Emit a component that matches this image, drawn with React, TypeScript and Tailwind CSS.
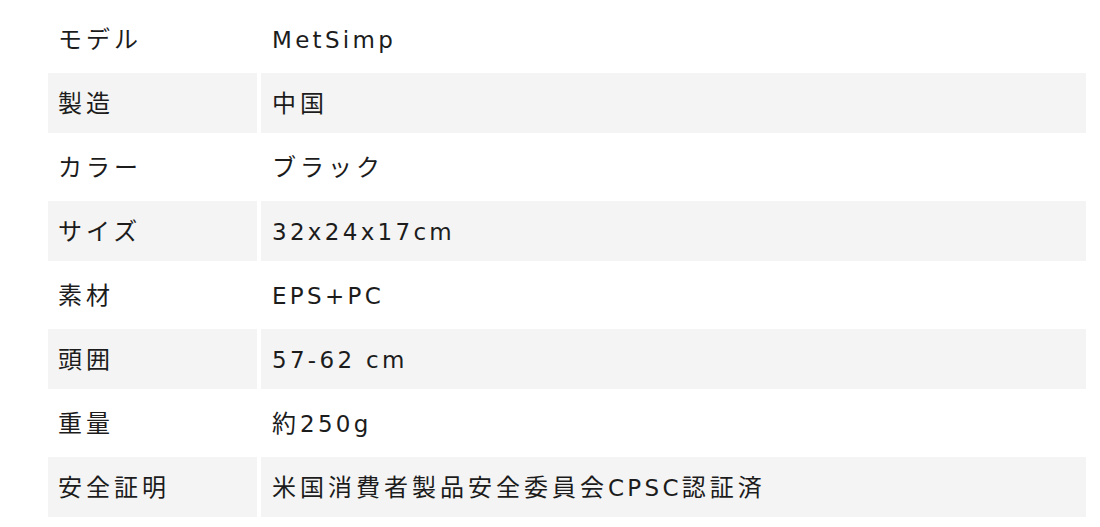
import React from "react";

const rows: [string, string][] = [
  ["モデル", "MetSimp"],
  ["製造", "中国"],
  ["カラー", "ブラック"],
  ["サイズ", "32x24x17cm"],
  ["素材", "EPS+PC"],
  ["頭囲", "57-62 cm"],
  ["重量", "約250g"],
  ["安全証明", "米国消費者製品安全委員会CPSC認証済"],
];

function Txt({ s }: { s: string }) {
  const parts = s.split(/([\u3000-\u9fff\uff00-\uffef]+)/).filter(Boolean);
  return (
    <>
      {parts.map((p, i) =>
        /[\u3000-\u9fff\uff00-\uffef]/.test(p) ? (
          <span key={i} className="text-[24px] tracking-[4px]">{p}</span>
        ) : (
          <span key={i}>{p}</span>
        )
      )}
    </>
  );
}

export default function App() {
  return (
    <div className="w-[1100px] h-[527px] bg-white overflow-hidden" style={{ fontFamily: '"DejaVu Sans", "Noto Sans CJK JP", sans-serif' }}>
      <table className="ml-[44px] mt-[5px] w-[1046px] border-separate border-spacing-[4px] text-[23px] leading-none text-[#1c1c1c] tracking-[3.3px]">
        <tbody>
          {rows.map(([k, v], i) => (
            <tr key={k} className="h-[60px]">
              <td className={`w-[209px] pl-[10px] pt-[2px] align-middle ${i % 2 === 1 ? "bg-[#f4f4f4]" : ""}`}><Txt s={k} /></td>
              <td className={`pl-[11px] pt-[2px] align-middle ${i % 2 === 1 ? "bg-[#f4f4f4]" : ""}`}><Txt s={v} /></td>
            </tr>
          ))}
        </tbody>
      </table>
    </div>
  );
}
